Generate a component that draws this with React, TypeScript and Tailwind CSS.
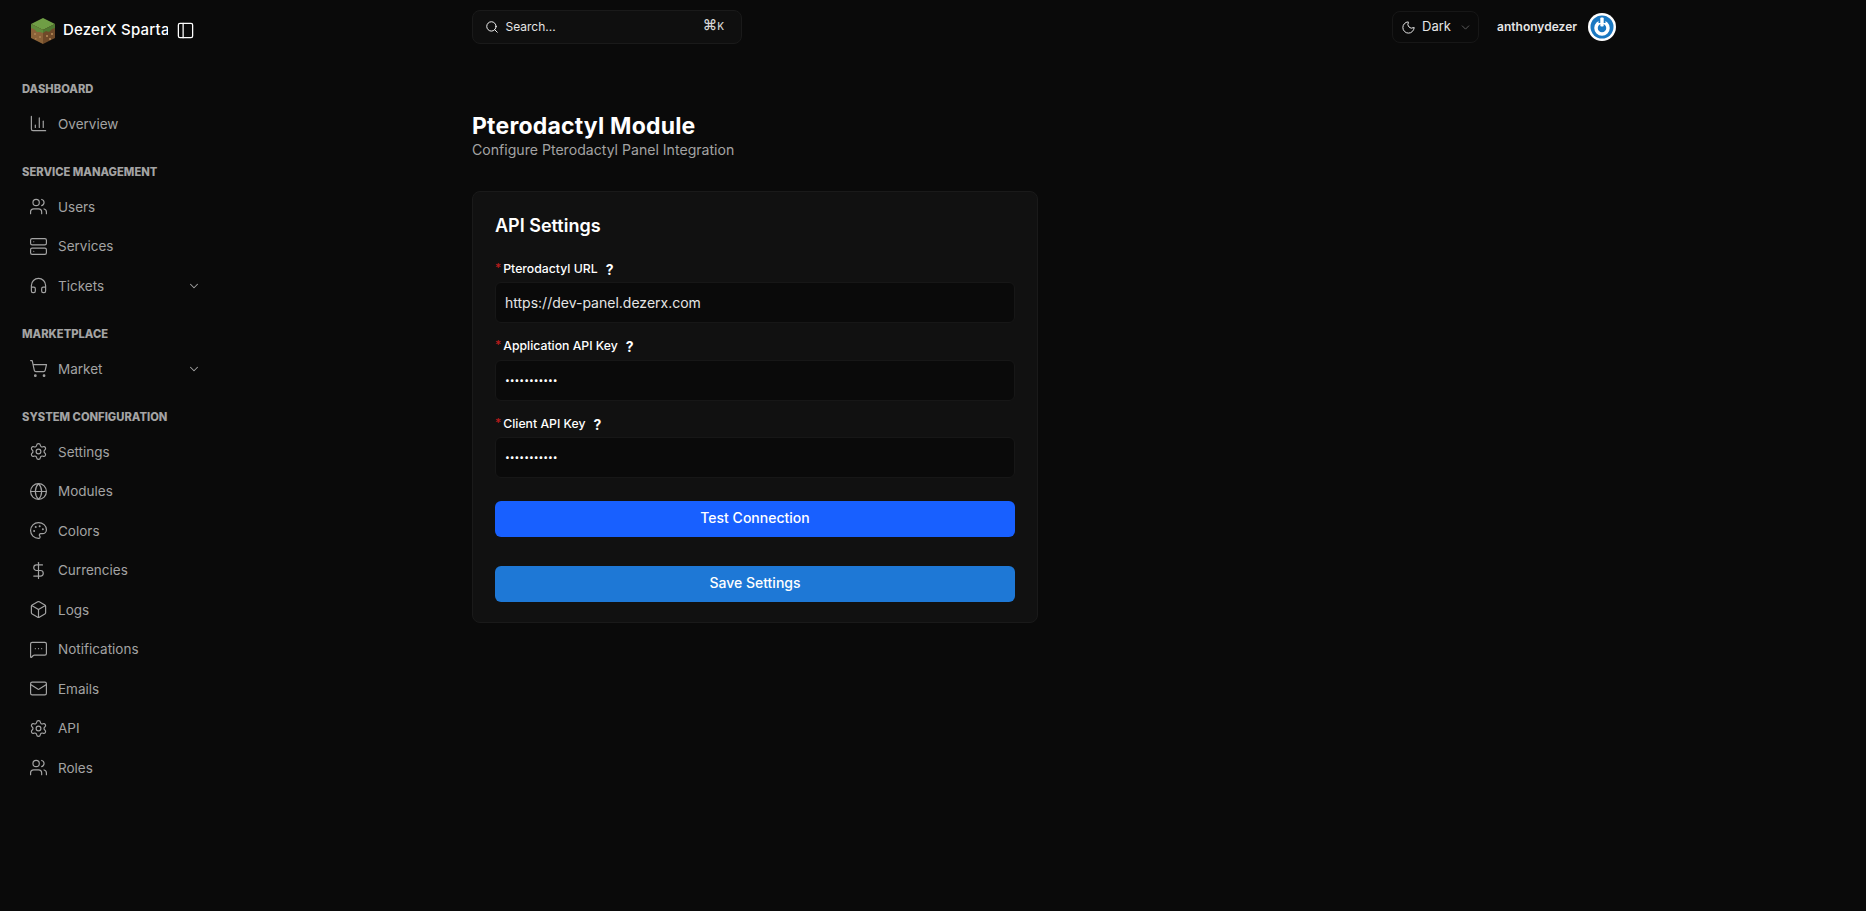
import { BarChart3, Users, Server, Headphones, ChevronDown, ShoppingCart, Settings, Globe, Palette, DollarSign, Box, MessageSquareMore, Mail, PanelLeft, Search, Moon } from 'lucide-react'
import type { LucideIcon } from 'lucide-react'

// ─── Sidebar data ────────────────────────────────────────────

interface NavItem {
  label: string
  icon: LucideIcon
  caret?: boolean
}

const NAV_GROUPS: { title: string; items: NavItem[] }[] = [
  { title: 'Dashboard', items: [{ label: 'Overview', icon: BarChart3 }] },
  {
    title: 'Service Management',
    items: [
      { label: 'Users', icon: Users },
      { label: 'Services', icon: Server },
      { label: 'Tickets', icon: Headphones, caret: true },
    ],
  },
  { title: 'Marketplace', items: [{ label: 'Market', icon: ShoppingCart, caret: true }] },
  {
    title: 'System Configuration',
    items: [
      { label: 'Settings', icon: Settings },
      { label: 'Modules', icon: Globe },
      { label: 'Colors', icon: Palette },
      { label: 'Currencies', icon: DollarSign },
      { label: 'Logs', icon: Box },
      { label: 'Notifications', icon: MessageSquareMore },
      { label: 'Emails', icon: Mail },
      { label: 'API', icon: Settings },
      { label: 'Roles', icon: Users },
    ],
  },
]

const FIELDS = [
  { label: 'Pterodactyl URL', value: 'https://dev-panel.dezerx.com', secret: false },
  { label: 'Application API Key', value: '•••••••••••', secret: true },
  { label: 'Client API Key', value: '•••••••••••', secret: true },
]

// ─── Logo ────────────────────────────────────────────────────

function GrassBlock() {
  return (
    <svg viewBox="0 0 24 26" className="w-[24px] h-[26px] shrink-0">
      <path d="M12 0 L24 6 L12 12 L0 6 Z" fill="#6f9e45" />
      <path d="M0 6 L12 12 L12 26 L0 20 Z" fill="#8a6238" />
      <path d="M24 6 L12 12 L12 26 L24 20 Z" fill="#6f4a29" />
      <path d="M0 6 L12 12 L12 15 L9 14 L6 14 L3 11 L0 10 Z" fill="#5f8c3a" />
      <path d="M24 6 L12 12 L12 15 L15 13 L18 14 L21 11 L24 10 Z" fill="#4e7a30" />
      <path d="M3 15h2v2H3zM8 18h2v2H8zM4 20h1.500v1.500H4zM15 17h2v2h-2zM20 15h2v2h-2zM18 20h2v2h-2z" fill="#a67c4e" />
    </svg>
  )
}

function Sidebar() {
  return (
    <aside className="w-[240px] shrink-0">
      <div className="h-[60px] mb-[14px] flex items-center pl-[31px] pt-[1px]">
        <GrassBlock />
        <div className="ml-[8px] w-[105px] overflow-hidden whitespace-nowrap text-[15px] font-medium text-white tracking-[0.2px]">
          DezerX Spartan
        </div>
        <PanelLeft className="ml-[8px] w-[19px] h-[19px] text-white" strokeWidth={1.6} />
      </div>
      {NAV_GROUPS.map(group => (
        <div key={group.title} className="mb-[13.500px]">
          <div className="h-[30px] flex items-center pl-[22px] text-[11.200px] font-extrabold uppercase text-[#a3a3a3] whitespace-nowrap">
            {group.title}
          </div>
          {group.items.map(item => {
            const Icon = item.icon
            return (
              <div key={item.label} className="h-[39.500px] flex items-center pl-[29px] text-[13.500px] text-[#a3a3a3]">
                <Icon className="w-[19px] h-[19px] shrink-0" strokeWidth={1.5} />
                <span className="ml-[10px]">{item.label}</span>
                {item.caret && <ChevronDown className="w-[14px] h-[14px] ml-auto mr-[39px]" strokeWidth={1.8} />}
              </div>
            )
          })}
        </div>
      ))}
    </aside>
  )
}

// ─── Top bar ─────────────────────────────────────────────────

function PowerAvatar() {
  return (
    <svg viewBox="0 0 28 28" className="w-[28px] h-[28px] ml-[11px]">
      <circle cx="14" cy="14" r="14" fill="#ffffff" />
      <circle cx="14" cy="14" r="11.500" fill="#1a78c2" />
      <circle cx="14" cy="15" r="6" fill="none" stroke="#ffffff" strokeWidth="3.500" />
      <rect x="10.500" y="3" width="7" height="7" fill="#1a78c2" />
      <rect x="12.300" y="4.500" width="3.400" height="9" rx="1" fill="#ffffff" />
    </svg>
  )
}

function TopBar() {
  return (
    <div className="h-[53px] pt-[10px] flex items-start">
      <div className="w-[270px] h-[34px] flex items-center pl-[12px] pr-[12px] rounded-lg border border-[#1a1a1a] bg-[#0f0f0f]">
        <Search className="w-[14px] h-[14px] text-white" strokeWidth={1.6} />
        <span className="ml-[6.500px] text-[12px] text-[#e5e5e5]">Search...</span>
        <span className="ml-auto mr-[5px] mb-[3px] text-[14.500px] leading-none font-medium text-[#d4d4d4]">⌘<span className="text-[10px]">K</span></span>
      </div>
      <div className="ml-auto mt-[1px] flex items-center h-[32px]">
        <div className="w-[87px] h-[32px] flex items-center pl-[8px] rounded-lg border border-[#171717]">
          <Moon className="w-[15px] h-[15px] text-[#e5e5e5]" strokeWidth={1.6} />
          <span className="ml-[6px] text-[13px] text-[#e5e5e5]">Dark</span>
          <ChevronDown className="w-[13px] h-[13px] ml-[8px] text-[#666666]" strokeWidth={1.6} />
        </div>
        <span className="ml-[18px] text-[12px] font-semibold text-[#e5e5e5]">anthonydezer</span>
        <PowerAvatar />
      </div>
    </div>
  )
}

// ─── Settings form ───────────────────────────────────────────

function Field({ label, value, secret }: { label: string; value: string; secret: boolean }) {
  return (
    <div className="mb-[11.500px]">
      <div className="h-[24px] flex items-center text-[12.250px] font-medium text-white">
        <span className="text-[#b91c1c] mr-[2px] -mt-[3px] text-[12px]">*</span>
        {label}
        <span className="ml-[8px] font-bold text-[14px]">?</span>
      </div>
      <div className={`h-[41px] mt-[1px] flex items-center pl-[9px] rounded-md border border-[#171717] bg-[#0a0a0a] ${secret ? 'text-[8.500px] text-white' : 'text-[14px] text-[#e5e5e5]'}`}>
        {value}
      </div>
    </div>
  )
}

function SettingsCard() {
  return (
    <div className="w-[566px] h-[432px] mt-[31px] rounded-lg border border-[#1a1a1a] bg-[#111111] px-[22px] pt-[22px]">
      <h2 className="text-[18px] leading-[24px] font-semibold text-white mb-[19px]">API Settings</h2>
      {FIELDS.map(f => (
        <Field key={f.label} {...f} />
      ))}
      <button className="block w-full h-[36px] mt-[22.500px] pb-[2px] rounded-md bg-[#1860ff] text-[14px] font-medium text-white">Test Connection</button>
      <button className="block w-full h-[36px] mt-[29px] pb-[2px] rounded-md bg-[#1e78d6] text-[14px] font-medium text-white">Save Settings</button>
    </div>
  )
}

export default function App() {
  return (
    <div className="flex min-h-[911px] bg-[#0a0a0a] font-['Inter',sans-serif]">
      <Sidebar />
      <main className="ml-[232px] w-[1144px]">
        <TopBar />
        <h1 className="mt-[60px] text-[23px] leading-[27px] font-bold tracking-[0.2px] text-white">Pterodactyl Module</h1>
        <p className="text-[14.100px] leading-[20px] text-[#a3a3a3]">Configure Pterodactyl Panel Integration</p>
        <SettingsCard />
      </main>
    </div>
  )
}
